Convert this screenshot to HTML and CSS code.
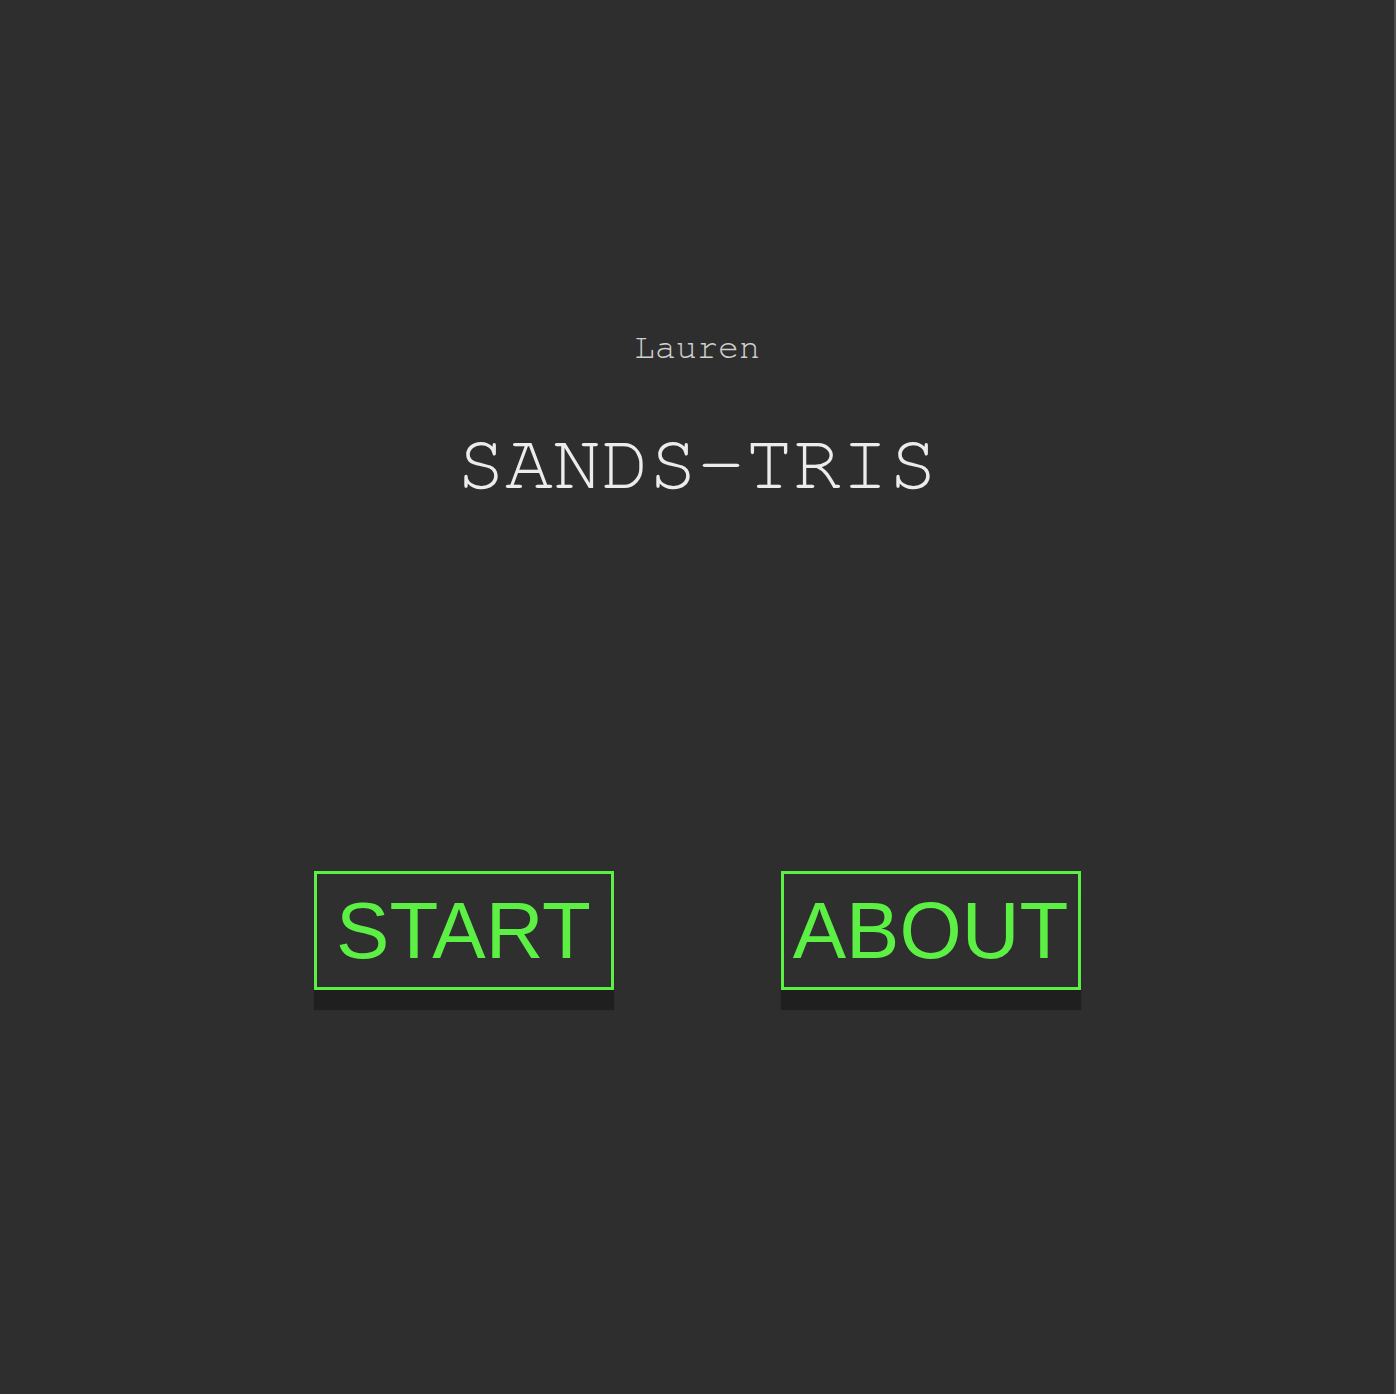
FILE: index.html
```html
<!DOCTYPE html>
<html lang="en">
<head>
<meta charset="utf-8">
<title>SANDS-TRIS</title>
<link rel="stylesheet" href="styles.css">
</head>
<body>
<main class="screen">
  <header class="titles">
    <p class="author">Lauren</p>
    <h1 class="title">SANDS-TRIS</h1>
  </header>
  <nav class="menu">
    <button class="menu-btn" type="button">START</button>
    <button class="menu-btn" type="button">ABOUT</button>
  </nav>
</main>
</body>
</html>
```
FILE: styles.css
```css
html, body {
  margin: 0;
  padding: 0;
  height: 100%;
}
body {
  background: #2e2e2e;
  border-right: 2px solid #4e4e4e;
  box-sizing: border-box;
  overflow: hidden;
}
.screen {
  display: flex;
  flex-direction: column;
  align-items: center;
  padding-top: 328px;
}
.titles {
  display: flex;
  flex-direction: column;
  align-items: center;
}
.author {
  margin: 0;
  font-family: "Nimbus Mono PS", "Nimbus Mono L", "FreeMono", "Liberation Mono", "Courier New", monospace;
  font-size: 35px;
  line-height: 40px;
  color: #d0d0d0;
}
.title {
  margin: 53px 0 0;
  font-family: "Nimbus Mono PS", "Nimbus Mono L", "FreeMono", "Liberation Mono", "Courier New", monospace;
  font-weight: normal;
  font-size: 80px;
  line-height: 86px;
  color: #ececec;
}
.menu {
  display: flex;
  gap: 167px;
  margin-top: 364px;
}
.menu-btn {
  width: 300px;
  height: 119px;
  box-sizing: border-box;
  border: 3px solid #5cf045;
  background: #2f2f2f;
  color: #5cf045;
  font-family: "Liberation Sans", Arial, sans-serif;
  font-size: 80px;
  line-height: 1;
  padding: 0;
  display: flex;
  align-items: center;
  justify-content: center;
  box-shadow: 0 20px 1px #1f1f1f;
  cursor: pointer;
}
```
